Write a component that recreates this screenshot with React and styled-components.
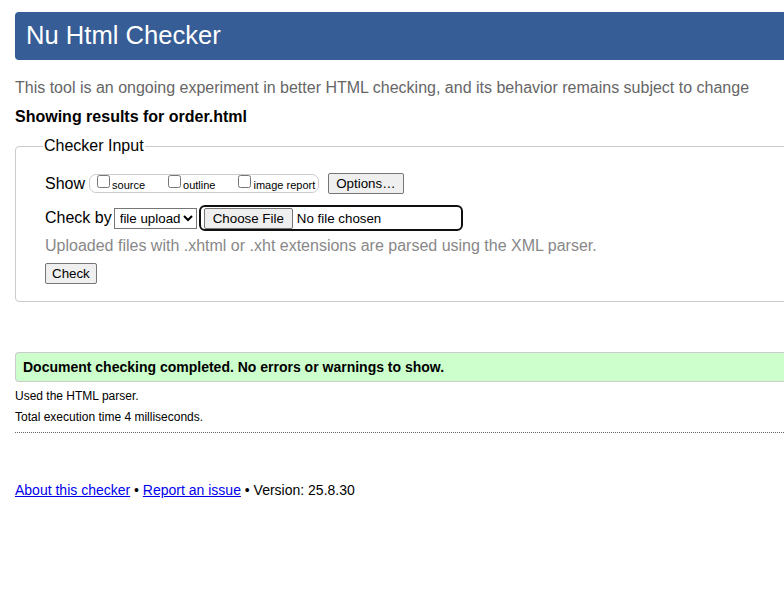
import styled, { createGlobalStyle } from 'styled-components';

const GlobalStyle = createGlobalStyle`
  html, body {
    margin: 0;
    padding: 0;
    overflow: hidden;
    background: #fff;
  }
  body {
    font-family: "Liberation Sans", Arial, sans-serif;
    color: #000;
  }
`;

const Page = styled.div`
  width: 1000px;
  padding: 12px 0 0 15px;
  box-sizing: border-box;
`;

const Header = styled.h1`
  margin: 0;
  height: 48px;
  padding: 0 11px 2px;
  box-sizing: border-box;
  display: flex;
  align-items: center;
  background: #365d95;
  color: #fff;
  font-size: 25.6px;
  font-weight: normal;
  border-radius: 4px;
`;

const Intro = styled.p`
  margin: 18px 0 0;
  font-size: 16px;
  line-height: 19px;
  color: #666;
`;

const Results = styled.p`
  margin: 10px 0 0;
  font-size: 16px;
  line-height: 19px;
  font-weight: bold;
`;

const Fieldset = styled.fieldset`
  margin: 11px 0 0;
  padding: 8px 29px 17px;
  border: 1px solid #ccc;
  border-radius: 4px;
  legend {
    padding: 0 1px;
    margin-left: -2px;
    font-size: 16px;
    line-height: 18px;
  }
`;

const Row = styled.div`
  display: flex;
  align-items: center;
  font-size: 16px;
  margin-top: ${(p) => p.$top || 0}px;
`;

const Label = styled.span`
  margin-right: ${(p) => p.$gap ?? 4}px;
`;

const Group = styled.span`
  display: inline-flex;
  align-items: center;
  height: 17px;
  padding: 0 3px 0 3px;
  border: 1px solid #ccc;
  border-radius: 7px;
  margin-right: 9px;
`;

const Option = styled.label`
  display: inline-flex;
  align-items: center;
  font-size: 11px;
  margin-right: ${(p) => p.$gap || 0}px;
  input {
    margin: 0 2px 0 4px;
    width: 13px;
    height: 13px;
    position: relative;
    top: -2px;
  }
  span {
    position: relative;
    top: 1px;
  }
`;

const Button = styled.button`
  font-family: "Liberation Sans", Arial, sans-serif;
  font-size: 13.33px;
  color: #000;
  background: #efefef;
  border: 1px solid #767676;
  border-radius: 2px;
  height: 21px;
  padding: 0 7px;
  line-height: 19px;
`;

const Select = styled.select`
  font-family: "Liberation Sans", Arial, sans-serif;
  font-size: 13.33px;
  height: 21px;
  width: 83px;
  border: 1px solid #767676;
  border-radius: 0;
  background: #fff;
  color: #000;
  padding: 0 0 0 1px;
  margin-right: 2px;
`;

const FileBox = styled.span`
  display: inline-flex;
  align-items: center;
  width: 257px;
  height: 22px;
  padding: 0 0 0 3px;
  border: 2px solid #101010;
  border-radius: 6px;
  font-size: 13.33px;
  ${Button} {
    margin-right: 4px;
    height: 21px;
    padding: 0 8px;
  }
`;

const Hint = styled.p`
  margin: 5px 0 0;
  font-size: 16px;
  line-height: 19px;
  color: #888;
`;

const CheckButton = styled(Button)`
  margin-top: 8px;
  padding: 0 6px;
`;

const Success = styled.div`
  margin-top: 50px;
  height: 28px;
  padding: 0 7px;
  display: flex;
  align-items: center;
  background: #ccffcc;
  border: 1px solid #ccc;
  border-right: none;
  border-radius: 4px 0 0 4px;
  font-size: 14px;
  font-weight: bold;
`;

const Detail = styled.p`
  margin: ${(p) => p.$top}px 0 0;
  font-size: 12px;
  line-height: 14px;
`;

const Divider = styled.hr`
  margin: 8px 0 0;
  border: none;
  border-top: 1px dotted #666;
  height: 0;
`;

const Footer = styled.p`
  margin: 49px 0 0;
  font-size: 14px;
  line-height: 16px;
  a {
    color: #0000ee;
    text-decoration: underline;
  }
`;

export default function App() {
  return (
    <>
      <GlobalStyle />
      <Page>
        <Header>Nu Html Checker</Header>
        <Intro>
          This tool is an ongoing experiment in better HTML checking, and its behavior remains subject to change
        </Intro>
        <Results>Showing results for order.html</Results>
        <Fieldset>
          <legend>Checker Input</legend>
          <Row $top={10}>
            <Label>Show</Label>
            <Group>
              <Option $gap={19}>
                <input type="checkbox" />
                <span>source</span>
              </Option>
              <Option $gap={19}>
                <input type="checkbox" />
                <span>outline</span>
              </Option>
              <Option>
                <input type="checkbox" />
                <span>image report</span>
              </Option>
            </Group>
            <Button>Options…</Button>
          </Row>
          <Row $top={11}>
            <Label $gap={2}>Check by</Label>
            <Select defaultValue="file">
              <option value="file">file upload</option>
            </Select>
            <FileBox>
              <Button>Choose File</Button>
              No file chosen
            </FileBox>
          </Row>
          <Hint>Uploaded files with .xhtml or .xht extensions are parsed using the XML parser.</Hint>
          <CheckButton>Check</CheckButton>
        </Fieldset>
        <Success>Document checking completed. No errors or warnings to show.</Success>
        <Detail $top={7}>Used the HTML parser.</Detail>
        <Detail $top={7}>Total execution time 4 milliseconds.</Detail>
        <Divider />
        <Footer>
          <a href="#about">About this checker</a> • <a href="#issue">Report an issue</a> • Version: 25.8.30
        </Footer>
      </Page>
    </>
  );
}
